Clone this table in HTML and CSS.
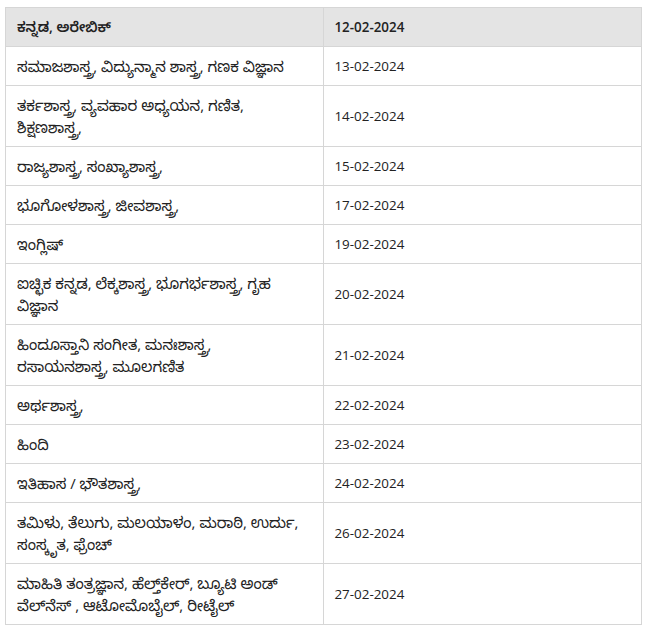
FILE: index.html
```html
<!DOCTYPE html>
<html lang="kn">
<head>
<meta charset="utf-8">
<title>ವೇಳಾಪಟ್ಟಿ</title>
<link rel="stylesheet" href="styles.css">
</head>
<body>
<div class="wrap">
<table class="schedule">
<thead>
<tr><th class="subj">ಕನ್ನಡ, ಅರೇಬಿಕ್</th><th class="date">12-02-2024</th></tr>
</thead>
<tbody>
<tr><td class="subj">ಸಮಾಜಶಾಸ್ತ್ರ, ವಿದ್ಯುನ್ಮಾನ ಶಾಸ್ತ್ರ, ಗಣಕ ವಿಜ್ಞಾನ</td><td class="date">13-02-2024</td></tr>
<tr><td class="subj">ತರ್ಕಶಾಸ್ತ್ರ, ವ್ಯವಹಾರ ಅಧ್ಯಯನ, ಗಣಿತ,<br>ಶಿಕ್ಷಣಶಾಸ್ತ್ರ,</td><td class="date">14-02-2024</td></tr>
<tr><td class="subj">ರಾಜ್ಯಶಾಸ್ತ್ರ, ಸಂಖ್ಯಾಶಾಸ್ತ್ರ,</td><td class="date">15-02-2024</td></tr>
<tr><td class="subj">ಭೂಗೋಳಶಾಸ್ತ್ರ, ಜೀವಶಾಸ್ತ್ರ,</td><td class="date">17-02-2024</td></tr>
<tr><td class="subj">ಇಂಗ್ಲಿಷ್</td><td class="date">19-02-2024</td></tr>
<tr><td class="subj">ಐಚ್ಛಿಕ ಕನ್ನಡ, ಲೆಕ್ಕಶಾಸ್ತ್ರ, ಭೂಗರ್ಭಶಾಸ್ತ್ರ, ಗೃಹ<br>ವಿಜ್ಞಾನ</td><td class="date">20-02-2024</td></tr>
<tr><td class="subj">ಹಿಂದೂಸ್ತಾನಿ ಸಂಗೀತ, ಮನಃಶಾಸ್ತ್ರ,<br>ರಸಾಯನಶಾಸ್ತ್ರ, ಮೂಲಗಣಿತ</td><td class="date">21-02-2024</td></tr>
<tr><td class="subj">ಅರ್ಥಶಾಸ್ತ್ರ,</td><td class="date">22-02-2024</td></tr>
<tr><td class="subj">ಹಿಂದಿ</td><td class="date">23-02-2024</td></tr>
<tr><td class="subj">ಇತಿಹಾಸ / ಭೌತಶಾಸ್ತ್ರ,</td><td class="date">24-02-2024</td></tr>
<tr><td class="subj">ತಮಿಳು, ತೆಲುಗು, ಮಲಯಾಳಂ, ಮರಾಠಿ, ಉರ್ದು,<br>ಸಂಸ್ಕೃತ, ಫ್ರೆಂಚ್</td><td class="date">26-02-2024</td></tr>
<tr><td class="subj">ಮಾಹಿತಿ ತಂತ್ರಜ್ಞಾನ, ಹೆಲ್ತ್‌ಕೇರ್, ಬ್ಯೂಟಿ ಅಂಡ್<br>ವೆಲ್‌ನೆಸ್ , ಆಟೋಮೊಬೈಲ್, ರೀಟೈಲ್</td><td class="date">27-02-2024</td></tr>
</tbody>
</table>
</div>
</body>
</html>
```
FILE: styles.css
```css
html, body {
  margin: 0;
  padding: 0;
  background: #ffffff;
}
.wrap {
  padding: 7px 6px 0 5px;
}
.schedule {
  width: 637px;
  border-collapse: collapse;
  table-layout: fixed;
  font-family: "Segoe UI", "Open Sans", "Noto Sans Kannada", "Noto Sans", sans-serif;
  font-size: 14px;
  line-height: 22px;
  color: #222222;
}
.schedule th,
.schedule td {
  width: 50%;
  border: 1px solid #d6d6d6;
  padding: 8px 10px 8px 11px;
  text-align: left;
  vertical-align: middle;
}
.schedule th {
  background: #e4e4e4;
  font-weight: 600;
}
.schedule td.subj {
  font-size: 15px;
  padding-top: 8px;
  padding-bottom: 8px;
}
.schedule .date {
  font-size: 13.4px;
  padding-left: 10px;
}
```
